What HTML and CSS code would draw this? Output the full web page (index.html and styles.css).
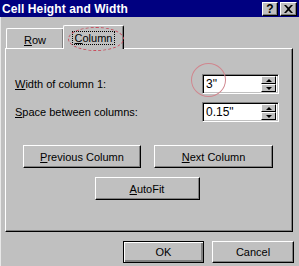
FILE: index.html
```html
<!DOCTYPE html>
<html>
<head>
<meta charset="utf-8">
<link rel="stylesheet" href="styles.css">
</head>
<body>
<div class="dialog">
  <div class="titlebar">
    <span class="title">Cell Height and Width</span>
    <div class="tbtns">
      <span class="tbtn help">?</span>
      <span class="tbtn close">
        <svg width="9" height="8" viewBox="0 0 9 8"><path d="M0 0h2l2.5 2.5L7 0h2L5.5 4 9 8H7L4.5 5.5 2 8H0l3.5-4z" fill="#000"/></svg>
      </span>
    </div>
  </div>
  <div class="content">
    <div class="tabs">
      <div class="tab"><span><u>R</u>ow</span></div>
      <div class="tab active"><span class="focus"><u>C</u>olumn</span></div>
    </div>
    <div class="panel">
      <div class="field">
        <label><u>W</u>idth of column 1:</label>
        <div class="spin">
          <span class="val">3"</span>
          <div class="arrows">
            <span class="arr"><i class="up"></i></span>
            <span class="arr"><i class="down"></i></span>
          </div>
        </div>
      </div>
      <div class="field">
        <label><u>S</u>pace between columns:</label>
        <div class="spin">
          <span class="val">0.15"</span>
          <div class="arrows">
            <span class="arr"><i class="up"></i></span>
            <span class="arr"><i class="down"></i></span>
          </div>
        </div>
      </div>
      <div class="btnrow">
        <button class="btn wide"><u>P</u>revious Column</button>
        <button class="btn wide2"><u>N</u>ext Column</button>
      </div>
      <div class="btnrow second">
        <button class="btn auto"><u>A</u>utoFit</button>
      </div>
    </div>
    <div class="footer">
      <button class="btn ok">OK</button>
      <button class="btn cancel">Cancel</button>
    </div>
  </div>
  <div class="mark mark-tab"></div>
  <div class="mark mark-val"></div>
</div>
</body>
</html>
```
FILE: styles.css
```css
html, body {
  margin: 0;
  padding: 0;
  background: #c0c0c0;
}
.dialog {
  position: relative;
  width: 299px;
  height: 266px;
  background: #c0c0c0;
  font-family: "Liberation Sans", Arial, sans-serif;
  font-size: 11px;
  color: #000;
  overflow: hidden;
  box-shadow: inset 1px 0 0 #e8e8e8;
}
.titlebar {
  height: 17px;
  background: #000080;
  display: flex;
  align-items: center;
  justify-content: space-between;
  padding: 0 2px 0 2px;
}
.title {
  color: #fff;
  font-weight: bold;
  font-size: 12px;
  letter-spacing: 0.1px;
}
.tbtns {
  display: flex;
  gap: 2px;
}
.tbtn {
  width: 16px;
  height: 14px;
  box-sizing: border-box;
  background: #c0c0c0;
  border-top: 1px solid #fff;
  border-left: 1px solid #fff;
  border-right: 1px solid #000;
  border-bottom: 1px solid #000;
  box-shadow: inset -1px -1px 0 #808080;
  display: flex;
  align-items: center;
  justify-content: center;
  font-weight: bold;
  font-size: 12px;
  line-height: 1;
}
.tbtn.close { width: 17px; }
.content {
  padding: 8px 6px 0 5px;
}
.tabs {
  display: flex;
  align-items: flex-end;
  padding-left: 1px;
  height: 23px;
  position: relative;
  z-index: 2;
}
.tab {
  box-sizing: border-box;
  width: 58px;
  height: 20px;
  border-top: 1px solid #fff;
  border-left: 1px solid #fff;
  border-right: 1px solid #000;
  box-shadow: inset -1px 0 0 #808080;
  border-radius: 2px 2px 0 0;
  display: flex;
  align-items: center;
  justify-content: center;
  padding-top: 2px;
}
.tab.active {
  width: 61px;
  height: 24px;
  margin-bottom: -1px;
  background: #c0c0c0;
  margin-left: -1px;
  padding-top: 0;
}
.focus {
  outline: 1px dotted #000;
  padding: 0 2px;
}
.panel {
  box-sizing: border-box;
  width: 288px;
  height: 184px;
  border-top: 1px solid #fff;
  border-left: 1px solid #fff;
  border-right: 1px solid #000;
  border-bottom: 1px solid #000;
  box-shadow: inset -1px -1px 0 #808080;
  padding: 25px 13px 0 9px;
}
.field {
  display: flex;
  align-items: center;
  justify-content: space-between;
  height: 20px;
  margin-bottom: 8px;
}
.spin {
  box-sizing: border-box;
  width: 77px;
  height: 20px;
  background: #fff;
  border-top: 1px solid #808080;
  border-left: 1px solid #808080;
  border-right: 1px solid #fff;
  border-bottom: 1px solid #fff;
  box-shadow: inset 1px 1px 0 #000, inset -1px -1px 0 #c0c0c0;
  display: flex;
  align-items: center;
  justify-content: space-between;
  padding: 2px 2px 2px 3px;
}
.val {
  font-size: 12px;
}
.arrows {
  display: flex;
  flex-direction: column;
  height: 16px;
}
.arr {
  box-sizing: border-box;
  width: 15px;
  height: 8px;
  background: #c0c0c0;
  border-top: 1px solid #fff;
  border-left: 1px solid #fff;
  border-right: 1px solid #000;
  border-bottom: 1px solid #000;
  display: flex;
  align-items: center;
  justify-content: center;
}
.arr i {
  width: 0;
  height: 0;
  border-left: 3px solid transparent;
  border-right: 3px solid transparent;
}
.arr i.up { border-bottom: 3px solid #000; }
.arr i.down { border-top: 3px solid #000; }
.btnrow {
  display: flex;
  justify-content: center;
  gap: 13px;
  margin-top: 23px;
  padding-left: 2px;
}
.btnrow.second {
  margin-top: 9px;
  padding-left: 0;
}
.btn {
  box-sizing: border-box;
  height: 23px;
  margin: 0;
  padding: 0;
  background: #c0c0c0;
  font-family: "Liberation Sans", Arial, sans-serif;
  font-size: 11px;
  color: #000;
  border-top: 1px solid #fff;
  border-left: 1px solid #fff;
  border-right: 1px solid #000;
  border-bottom: 1px solid #000;
  box-shadow: inset -1px -1px 0 #808080;
  border-radius: 0;
}
.btn.wide { width: 118px; }
.btn.wide2 { width: 119px; }
.btn.auto { width: 105px; }
.footer {
  display: flex;
  justify-content: flex-end;
  gap: 8px;
  margin-top: 9px;
  padding-right: 0;
  margin-right: -1px;
}
.btn.ok {
  width: 81px;
  height: 22px;
  border: 1px solid #000;
  box-shadow: inset 1px 1px 0 #fff, inset -2px -2px 0 #808080;
}
.btn.cancel {
  width: 82px;
  height: 22px;
}
.mark {
  position: absolute;
  z-index: 5;
  border: 1px solid #d0868e;
  border-radius: 50%;
  pointer-events: none;
}
.mark-tab {
  left: 68px;
  top: 27px;
  width: 54px;
  height: 22px;
  border: 1px dashed #c84a5a;
}
.mark-val {
  left: 191px;
  top: 63px;
  width: 33px;
  height: 32px;
}
```
